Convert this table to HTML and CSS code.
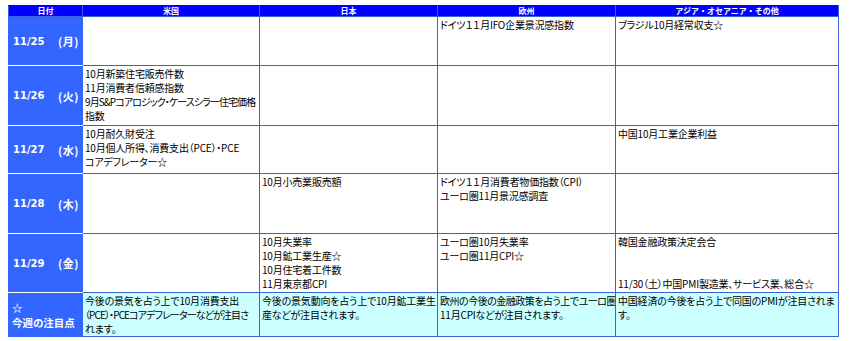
FILE: index.html
```html
<!DOCTYPE html>
<html lang="ja">
<head>
<meta charset="utf-8">
<link rel="stylesheet" href="styles.css">
</head>
<body>
<table class="cal">
  <colgroup>
    <col class="c-date"><col class="c-wd"><col class="c-us"><col class="c-jp"><col class="c-eu"><col class="c-as">
  </colgroup>
  <thead>
    <tr class="hd">
      <th colspan="2">日付</th>
      <th>米国</th>
      <th>日本</th>
      <th>欧州</th>
      <th>アジア・オセアニア・その他</th>
    </tr>
  </thead>
  <tbody>
    <tr class="r1">
      <td class="date">11/25</td><td class="wd">(月)</td>
      <td></td>
      <td></td>
      <td>ドイツ１１月IFO企業景況感指数</td>
      <td>ブラジル10月経常収支☆</td>
    </tr>
    <tr class="r2">
      <td class="date">11/26</td><td class="wd">(火)</td>
      <td>10月新築住宅販売件数<br>11月消費者信頼感指数<br><span class="tight">9月S&amp;Pコアロジック・ケースシラー住宅価格</span><br>指数</td>
      <td></td>
      <td></td>
      <td></td>
    </tr>
    <tr class="r3">
      <td class="date">11/27</td><td class="wd">(水)</td>
      <td>10月耐久財受注<br>10月個人所得、消費支出（PCE）・PCE<br>コアデフレーター☆</td>
      <td></td>
      <td></td>
      <td>中国10月工業企業利益</td>
    </tr>
    <tr class="r4">
      <td class="date">11/28</td><td class="wd">(木)</td>
      <td></td>
      <td>10月小売業販売額</td>
      <td>ドイツ１１月消費者物価指数（CPI）<br>ユーロ圏11月景況感調査</td>
      <td></td>
    </tr>
    <tr class="r5">
      <td class="date">11/29</td><td class="wd">(金)</td>
      <td></td>
      <td>10月失業率<br>10月鉱工業生産☆<br>10月住宅着工件数<br>11月東京都CPI</td>
      <td>ユーロ圏10月失業率<br>ユーロ圏11月CPI☆</td>
      <td>韓国金融政策決定会合<br><br><br>11/30（土）中国PMI製造業、サービス業、総合☆</td>
    </tr>
    <tr class="r6">
      <td class="focus" colspan="2">☆<br>今週の注目点</td>
      <td>今後の景気を占う上で10月消費支出<br><span class="tight">（PCE）・PCEコアデフレーターなどが注目さ</span><br>れます。</td>
      <td>今後の景気動向を占う上で10月鉱工業生<br>産などが注目されます。</td>
      <td><span class="tight2">欧州の今後の金融政策を占う上でユーロ圏</span><br>11月CPIなどが注目されます。</td>
      <td>中国経済の今後を占う上で同国のPMIが注目されま<br>す。</td>
    </tr>
  </tbody>
</table>
</body>
</html>
```
FILE: styles.css
```css
body {
  margin: 5px 0 0 8px;
  background: #ffffff;
  font-family: "Noto Sans CJK JP", sans-serif;
}

.cal {
  border-collapse: collapse;
  table-layout: fixed;
  width: 830px;
}

.c-date { width: 42px; }
.c-wd { width: 32px; }
.c-us { width: 177px; }
.c-jp { width: 178px; }
.c-eu { width: 178px; }
.c-as { width: 223px; }

.hd th {
  height: 10px;
  padding: 0;
  background: #0000ff;
  color: #ffffff;
  font-size: 8px;
  line-height: 10px;
  font-weight: bold;
  text-align: center;
  border: 1px solid #3a5ee0;
  border-top: 1px solid #0000ff;
}

.cal td {
  vertical-align: top;
  padding: 1px 2px 0 2px;
  border: 1px solid #3b62d0;
  font-size: 10px;
  line-height: 14px;
  color: #000000;
  font-feature-settings: "palt";
  letter-spacing: -0.2px;
  white-space: nowrap;
  overflow: hidden;
}

.tight {
  letter-spacing: -0.9px;
}

.tight2 {
  letter-spacing: -0.5px;
}

.cal td.date,
.cal td.wd,
.cal td.focus {
  background: #3366ff;
  color: #ffffff;
  font-weight: bold;
  vertical-align: middle;
  border-left-color: #3366ff;
  border-right-color: #3366ff;
  border-top-color: #ffffff;
  border-bottom-color: #ffffff;
}

.cal td.date {
  font-family: "DejaVu Sans", sans-serif;
  font-size: 10px;
  padding-left: 4px;
  letter-spacing: 0;
}

.cal td.wd {
  padding: 0 0 0 7px;
  font-size: 11px;
  letter-spacing: 0.5px;
}

.r1 .date, .r1 .wd { border-top-color: #0000ff; }

.cal td.focus {
  font-weight: bold;
  font-size: 10.5px;
  line-height: 15px;
  padding-left: 3px;
  padding-top: 0;
  letter-spacing: 0;
  border-bottom-color: #3366ff;
}

.r1 td { height: 47px; }
.r2 td { height: 58px; }
.r3 td { height: 46px; }
.r4 td { height: 58px; }
.r5 td { height: 57px; }
.r6 td { height: 42px; background: #ccffff; }
```
